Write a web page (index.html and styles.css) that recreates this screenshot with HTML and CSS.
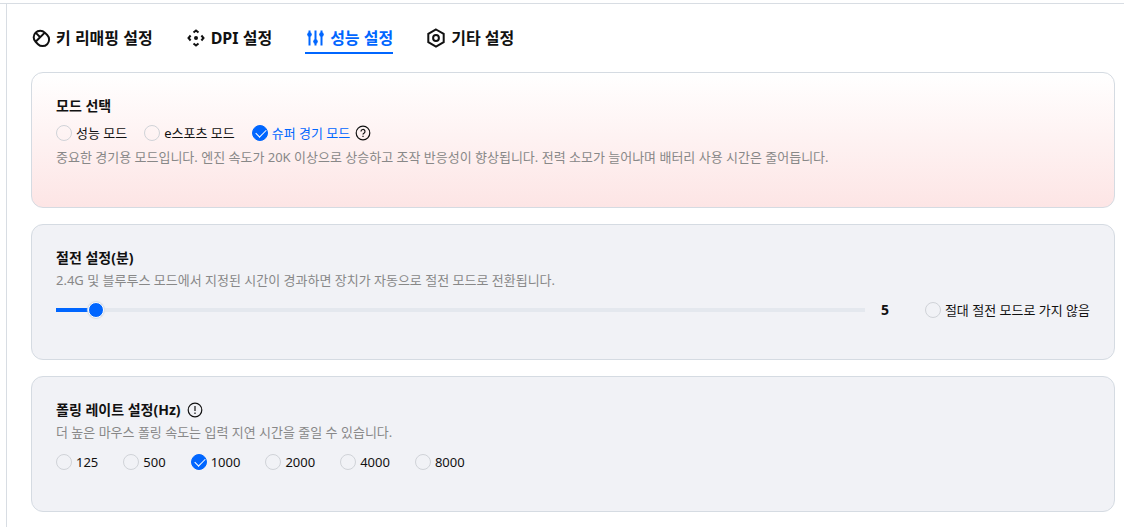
FILE: index.html
```html
<!DOCTYPE html>
<html lang="ko">
<head>
    <meta charset="UTF-8">
    <meta name="viewport" content="width=device-width, initial-scale=1.0">
    <title>성능 설정</title>
    <link rel="stylesheet" href="styles.css">
</head>
<body>
    <div class="page">
        <main class="panel">
            <nav class="tabs">
                <button class="tab" type="button">
                    <svg class="tab-icon" viewBox="0 0 20 20"><path d="M13.800 4.600a6.300 6.300 0 0 0-9.200 9.200l2.400 2.400a6.400 6.400 0 0 0 9.200-9.200zM4.600 13.800l9.200-9.200M4.600 4.600l4.600 4.600"/></svg>
                    키 리매핑 설정
                </button>
                <button class="tab" type="button">
                    <svg class="tab-icon" viewBox="0 0 20 20"><path d="M7.500 4.600l2.500-2.100 2.500 2.100M7.500 15.400l2.500 2.100 2.500-2.100M4.600 7.500L2.500 10l2.100 2.500M15.400 7.500l2.100 2.500-2.100 2.500"/><circle class="fill" cx="10" cy="10" r="2"/></svg>
                    DPI 설정
                </button>
                <button class="tab active" type="button">
                    <svg class="tab-icon" viewBox="0 0 20 20"><path d="M4.500 2.500v15M10.500 2.500v15M16.500 2.500v15"/><circle class="fill" cx="4.500" cy="6.500" r="2.300"/><circle class="fill" cx="10.500" cy="13.500" r="2.300"/><circle class="fill" cx="16.500" cy="6.500" r="2.300"/></svg>
                    성능 설정
                </button>
                <button class="tab" type="button">
                    <svg class="tab-icon" viewBox="0 0 20 20"><path d="M10 1.500l7.700 4.300v8.400L10 18.500l-7.700-4.300V5.800z"/><circle cx="10" cy="10" r="2.900"/></svg>
                    기타 설정
                </button>
            </nav>

            <section class="card card-mode">
                <h2 class="card-title">모드 선택</h2>
                <div class="options">
                    <label class="option"><input type="radio" name="mode">성능 모드</label>
                    <label class="option"><input type="radio" name="mode">e스포츠 모드</label>
                    <div class="option-group">
                        <label class="option selected"><input type="radio" name="mode" checked>슈퍼 경기 모드</label>
                        <svg class="hint-icon" viewBox="0 0 16 16"><circle cx="8" cy="8" r="6.800"/><path d="M6 6.500a2 2 0 1 1 3 1.700c-.7.4-1 .7-1 1.400M8 10.800v1.200"/></svg>
                    </div>
                </div>
                <p class="desc">중요한 경기용 모드입니다. 엔진 속도가 20K 이상으로 상승하고 조작 반응성이 향상됩니다. 전력 소모가 늘어나며 배터리 사용 시간은 줄어듭니다.</p>
            </section>

            <section class="card">
                <h2 class="card-title">절전 설정(분)</h2>
                <p class="desc">2.4G 및 블루투스 모드에서 지정된 시간이 경과하면 장치가 자동으로 절전 모드로 전환됩니다.</p>
                <div class="slider-row">
                    <input class="slider" type="range" min="1" max="100" value="5" aria-label="절전 설정(분)">
                    <output class="slider-value">5</output>
                    <label class="option"><input type="checkbox">절대 절전 모드로 가지 않음</label>
                </div>
            </section>

            <section class="card">
                <h2 class="card-title">
                    폴링 레이트 설정(Hz)
                    <svg class="hint-icon" viewBox="0 0 16 16"><circle cx="8" cy="8" r="6.800"/><path d="M8 4v5M8 10.500v1.500"/></svg>
                </h2>
                <p class="desc">더 높은 마우스 폴링 속도는 입력 지연 시간을 줄일 수 있습니다.</p>
                <div class="options rates">
                    <label class="option"><input type="radio" name="rate">125</label>
                    <label class="option"><input type="radio" name="rate">500</label>
                    <label class="option"><input type="radio" name="rate" checked>1000</label>
                    <label class="option"><input type="radio" name="rate">2000</label>
                    <label class="option"><input type="radio" name="rate">4000</label>
                    <label class="option"><input type="radio" name="rate">8000</label>
                </div>
            </section>
        </main>
    </div>
</body>
</html>
```
FILE: styles.css
```css
* {
    box-sizing: border-box;
}

body {
    margin: 0;
    padding-top: 3px;
    background: #fff;
    color: #111;
    font-family: "Noto Sans", "Noto Sans CJK KR", sans-serif;
    font-size: 13px;
    line-height: 20px;
}

.page {
    display: flex;
    min-height: calc(100vh - 3px);
    padding-left: 6px;
    border-top: 1px solid #d8dde3;
}

.panel {
    display: flex;
    flex: 1;
    flex-direction: column;
    gap: 16px;
    min-width: 0;
    padding: 20px 9px 15px 24px;
    border-left: 1px solid #d8dde3;
}

.tabs {
    display: flex;
    align-items: flex-start;
    gap: 33px;
    height: 32px;
}

.tab {
    display: flex;
    align-items: center;
    gap: 5px;
    height: 30px;
    padding: 0;
    border: 0;
    border-bottom: 2px solid transparent;
    background: none;
    color: #111;
    font-family: inherit;
    font-size: 16px;
    font-weight: 700;
    line-height: 24px;
    white-space: nowrap;
    cursor: pointer;
}

.tab.active {
    color: #0066ff;
    border-color: #0066ff;
}

.tab-icon,
.hint-icon {
    flex: none;
    fill: none;
    stroke: currentColor;
}

.tab-icon {
    width: 20px;
    height: 20px;
    stroke-width: 2;
}

.tab-icon .fill {
    fill: currentColor;
    stroke: none;
}

.hint-icon {
    width: 16px;
    height: 16px;
    stroke-width: 1.2;
}

.card {
    min-height: 136px;
    padding: 23px 24px;
    border: 1px solid #d5dbe2;
    border-radius: 12px;
    background: #f1f2f6;
}

.card-mode {
    background: linear-gradient(#fff, #fde5e5);
}

.card-title {
    display: flex;
    align-items: center;
    gap: 6px;
    margin: 0;
    font-size: 14px;
    line-height: 20px;
}

.desc {
    margin: 0;
    color: #888;
    line-height: 24px;
}

.options {
    display: flex;
    flex-wrap: wrap;
    gap: 17px;
    margin: 7px 0 2px;
}

.rates {
    gap: 25px;
    margin-top: 8px;
}

.option-group {
    display: flex;
    align-items: center;
    gap: 5px;
}

.option {
    display: flex;
    align-items: center;
    gap: 4px;
    white-space: nowrap;
    cursor: pointer;
}

.option.selected {
    color: #0066ff;
}

.option input {
    appearance: none;
    width: 16px;
    height: 16px;
    margin: 0;
    border: 1px solid #d0d3d8;
    border-radius: 50%;
}

.option input:checked {
    border-color: #0066ff;
    background: #0066ff;
}

.option input:checked::before {
    content: "";
    display: block;
    width: 9px;
    height: 5px;
    margin: 3px 0 0 3px;
    border-left: 1px solid #fff;
    border-bottom: 1px solid #fff;
    transform: rotate(-45deg);
}

.slider-row {
    display: flex;
    align-items: center;
    margin-top: 8px;
}

.slider {
    appearance: none;
    flex: 1;
    min-width: 0;
    height: 16px;
    margin: 0;
    border-radius: 2px;
    background: linear-gradient(#0066ff, #0066ff) 0 center / 5% 4px no-repeat,
                linear-gradient(#e4e8ee, #e4e8ee) 0 center / 100% 4px no-repeat;
}

.slider::-webkit-slider-thumb {
    appearance: none;
    width: 16px;
    height: 16px;
    border: 1px solid #fff;
    border-radius: 50%;
    background: #0066ff;
    box-shadow: 0 0 1px 1px #d8dde3;
}

.slider-value {
    width: 44px;
    margin: 0 0 0 16px;
    font-size: 14px;
    font-weight: 700;
}
```
